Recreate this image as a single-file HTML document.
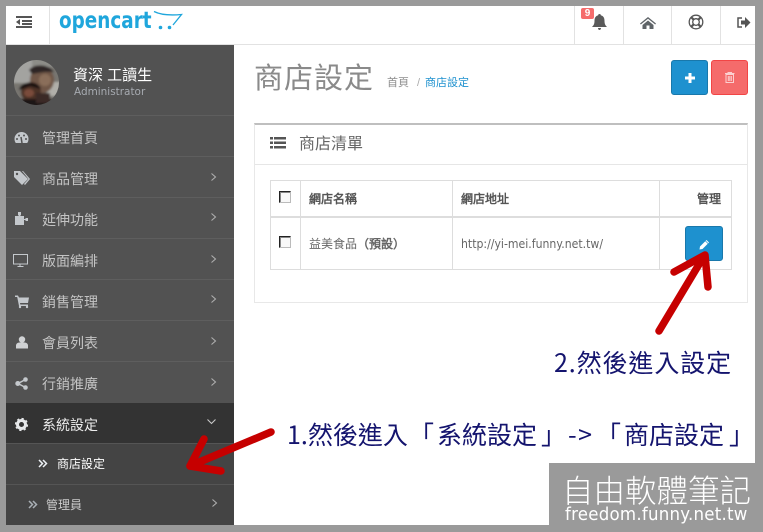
<!DOCTYPE html>
<html><head><meta charset="utf-8">
<style>
html,body{margin:0;padding:0;width:763px;height:532px;overflow:hidden;background:#9a9a9a}
*{box-sizing:border-box}
#p{position:relative;width:763px;height:532px;overflow:hidden;font-family:"Liberation Sans","Noto Sans CJK TC",sans-serif}
.a{position:absolute}
.t{position:absolute;white-space:nowrap;line-height:1}
.r{position:absolute;left:6px;width:228px;height:1px;background:#5e5e5e}
.m{position:absolute;left:42px;font-size:14px;color:#c4c4c4;white-space:nowrap;line-height:16px;font-family:"WenQuanYi Zen Hei","Liberation Sans",sans-serif}
svg{position:absolute;overflow:visible}
.c{position:absolute;left:279px;width:12px;height:12px;border:1px solid #bbb;border-top:1px solid #222;border-left:1px solid #222;background:#f8f8f8;box-shadow:inset 1px 1px 0 #888}
.n{position:absolute;white-space:nowrap;top:421px;font-size:25px;color:#14146e;font-family:'Noto Sans CJK TC',sans-serif;line-height:26px}
.h{font-size:12px;font-weight:bold;color:#555;font-family:'WenQuanYi Zen Hei',sans-serif}
</style></head><body><div id="p">
<div class="a" style="left:6px;top:6px;width:749px;height:519px;background:#fff"></div>
<!-- header -->
<div class="a" style="left:6px;top:44px;width:749px;height:1px;background:#e2e2e2"></div>
<div class="a" style="left:49px;top:6px;width:1px;height:38px;background:#e2e2e2"></div>
<div class="a" style="left:574px;top:6px;width:1px;height:38px;background:#e2e2e2"></div>
<div class="a" style="left:623px;top:6px;width:1px;height:38px;background:#e2e2e2"></div>
<div class="a" style="left:671px;top:6px;width:1px;height:38px;background:#e2e2e2"></div>
<div class="a" style="left:720px;top:6px;width:1px;height:38px;background:#e2e2e2"></div>
<svg style="left:16px;top:16px" width="17" height="13"><path d="M0 0h16v2H0zM6 4h10v2H6zM6 7h10v2H6zM0 10h16v2H0z" fill="#555"/><path d="M4 3v6L0 6z" fill="#555"/></svg>
<div class="t" style="left:59px;top:10px;font-size:23px;font-weight:bold;color:#1fa6dc;font-family:'DejaVu Sans',sans-serif;transform:scaleX(.8);transform-origin:0 0">opencart</div>
<svg style="left:153px;top:10px" width="30" height="22"><path d="M1 1.500C8 5 18 5.500 28.500 4.500L20 15" fill="none" stroke="#1fa6dc" stroke-width="1.300"/><circle cx="7.500" cy="17.500" r="1.800" fill="#1fa6dc"/><circle cx="16.500" cy="17.500" r="1.800" fill="#1fa6dc"/></svg>
<svg style="left:592px;top:14px" width="15" height="17"><path d="M7.500 0c1 0 1.300.6 1.300 1.300C11.500 2 12.500 4 12.500 7c0 3 1 4.500 2.500 6H0C1.500 11.500 2.500 10 2.500 7c0-3 1-5 3.700-5.700C6.200.6 6.500 0 7.500 0zM6 14h3c0 1-.6 2-1.500 2S6 15 6 14z" fill="#5a5a5a"/></svg>
<div class="a" style="left:581px;top:8px;width:13px;height:11px;background:#f56c6c;border-radius:2px;color:#fff;font-size:10px;font-weight:bold;text-align:center;line-height:11px">9</div>
<svg style="left:640px;top:17px" width="16" height="12"><path d="M8 0L0 6.500l.8 1L8 1.800l7.200 5.700.8-1zM2.500 8L8 3.500 13.500 8v4H9.500V8.500h-3V12h-4z" fill="#5f6468"/></svg>
<svg style="left:688px;top:14px" width="16" height="16"><circle cx="8" cy="8" r="6.800" fill="none" stroke="#555" stroke-width="1.300"/><circle cx="8" cy="8" r="3.300" fill="none" stroke="#555" stroke-width="1.300"/><path d="M3.200 3.200l2.500 2.500M12.800 3.200l-2.500 2.500M3.200 12.800l2.500-2.500M12.800 12.800l-2.500-2.500" stroke="#555" stroke-width="2.200"/></svg>
<svg style="left:737px;top:17px" width="14" height="12"><path d="M5 1H1v9h4" fill="none" stroke="#555" stroke-width="1.500"/><path d="M4 3.500h4V0l5.500 5.500L8 11V7.500H4z" fill="#555"/></svg>
<!-- sidebar -->
<div class="a" style="left:6px;top:45px;width:228px;height:358px;background:#525252"></div>
<div class="a" style="left:6px;top:403px;width:228px;height:40px;background:#333"></div>
<div class="a" style="left:6px;top:444px;width:228px;height:81px;background:#444"></div>
<div class="r" style="top:115px"></div><div class="r" style="top:156px"></div><div class="r" style="top:197px"></div><div class="r" style="top:238px"></div><div class="r" style="top:279px"></div><div class="r" style="top:320px"></div><div class="r" style="top:361px"></div>
<div class="r" style="top:443px;background:#555"></div><div class="r" style="top:484px;background:#555"></div>
<!-- avatar -->
<svg style="left:14px;top:60px" width="45" height="45"><defs><clipPath id="cp"><circle cx="22.500" cy="22.500" r="22.500"/></clipPath><filter id="bl"><feGaussianBlur stdDeviation="1"/></filter></defs><g clip-path="url(#cp)"><g filter="url(#bl)"><rect x="-3" y="-3" width="51" height="51" fill="#77746f"/><rect x="-3" y="-3" width="22" height="26" fill="#a3a3a0"/><rect x="18" y="-3" width="30" height="10" fill="#8d8d88"/><rect x="33" y="22" width="15" height="14" fill="#b0afa9"/><ellipse cx="28" cy="20" rx="12" ry="13" fill="#6f5647"/><path d="M15 10c5-7 20-6 25 2L30 12l-12 2z" fill="#2e2725"/><ellipse cx="31" cy="20" rx="6" ry="6" fill="#8a6e5a"/><ellipse cx="17" cy="32" rx="10" ry="10" fill="#4c3028"/><path d="M5 30c1-9 19-10 22-1l-11-3z" fill="#141110"/><ellipse cx="15" cy="33" rx="5" ry="4" fill="#7a4c3a"/><rect x="-3" y="39" width="51" height="10" fill="#1f1715"/><rect x="22" y="33" width="14" height="10" fill="#3a2a26"/></g></g></svg>
<div class="t" style="left:73px;top:68px;font-size:15px;color:#fff;font-family:'WenQuanYi Zen Hei',sans-serif">資深 工讀生</div>
<div class="t" style="left:74px;top:86px;font-size:11px;color:#a6aab0;font-family:'DejaVu Sans',sans-serif;transform:scaleX(.95);transform-origin:0 0">Administrator</div>
<div class="m" style="top:130px">管理首頁</div>
<div class="m" style="top:171px">商品管理</div>
<div class="m" style="top:212px">延伸功能</div>
<div class="m" style="top:253px">版面編排</div>
<div class="m" style="top:294px">銷售管理</div>
<div class="m" style="top:335px">會員列表</div>
<div class="m" style="top:376px">行銷推廣</div>
<div class="m" style="top:417px;color:#eee">系統設定</div>
<div class="m" style="left:57px;top:456px;font-size:12px;color:#fff">商店設定</div>
<div class="m" style="left:46px;top:497px;font-size:12px;color:#ccc">管理員</div>
<!-- side icons -->
<svg style="left:14px;top:131px" width="15" height="13"><path d="M7.500 1A7 7 0 0 0 .5 8c0 1.600.5 3 1.300 4h11.400c.8-1 1.300-2.400 1.300-4a7 7 0 0 0-7-7z" fill="#c4c8cc"/><path d="M8 12L7 6" stroke="#525252" stroke-width="1.500"/><circle cx="3" cy="8" r="1" fill="#525252"/><circle cx="12" cy="8" r="1" fill="#525252"/><circle cx="5" cy="4.500" r="1" fill="#525252"/><circle cx="10" cy="4.500" r="1" fill="#525252"/></svg>
<svg style="left:14px;top:171px" width="16" height="14"><path d="M0 0h6l8 8-6 6-8-8z" fill="#c4c8cc"/><circle cx="3" cy="3" r="1.200" fill="#525252"/><path d="M8 0h1l7 8-5 6-1-1 4.500-5z" fill="#c4c8cc"/></svg>
<svg style="left:15px;top:212px" width="14" height="13"><path d="M3 0h3v3h-.5v1H9v3h1.500V6H13v3h-2.500V8H9v5H0V4h3.500V3H3z" fill="#c4c8cc"/></svg>
<svg style="left:13px;top:254px" width="16" height="13"><path d="M.5.500h14v9.500H.5z" fill="none" stroke="#c4c8cc" stroke-width="1"/><path d="M7 10v2M4.500 12.500h6" stroke="#c4c8cc"/></svg>
<svg style="left:15px;top:295px" width="14" height="13"><path d="M0 .5h3l1 2h10l-1 5.500H5l.3 1.500H13V11H4L2.200 2H0z" fill="#c4c8cc"/><circle cx="5" cy="12" r="1.200" fill="#c4c8cc"/><circle cx="12" cy="12" r="1.200" fill="#c4c8cc"/></svg>
<svg style="left:16px;top:336px" width="12" height="13"><circle cx="6" cy="3.500" r="3.200" fill="#d0d2d4"/><path d="M0 12.500V9.500C0 7.500 2 6.500 3.500 6.500h5C10 6.500 12 7.500 12 9.500v3z" fill="#d0d2d4"/></svg>
<svg style="left:15px;top:377px" width="13" height="13"><path d="M10.500 2.500L3 6.500l7.500 4" fill="none" stroke="#c4c8cc" stroke-width="1.500"/><circle cx="10.500" cy="2.500" r="2.300" fill="#c4c8cc"/><circle cx="2.800" cy="6.500" r="2.500" fill="#c4c8cc"/><circle cx="10.500" cy="10.500" r="2.300" fill="#c4c8cc"/></svg>
<svg style="left:15px;top:418px" width="13" height="13"><circle cx="6.500" cy="6.500" r="4" fill="none" stroke="#e6e8ea" stroke-width="3"/><circle cx="6.500" cy="6.500" r="5.900" fill="none" stroke="#e6e8ea" stroke-width="1.400" stroke-dasharray="2.300 2.300"/></svg>
<!-- chevrons -->
<svg style="left:211px;top:173px" width="6" height="8"><path d="M.5.5l4 3.500-4 3.500" fill="none" stroke="#aeaeae" stroke-width="1.100"/></svg>
<svg style="left:211px;top:213px" width="6" height="8"><path d="M.5.5l4 3.500-4 3.500" fill="none" stroke="#aeaeae" stroke-width="1.100"/></svg>
<svg style="left:211px;top:255px" width="6" height="8"><path d="M.5.5l4 3.500-4 3.500" fill="none" stroke="#aeaeae" stroke-width="1.100"/></svg>
<svg style="left:211px;top:295px" width="6" height="8"><path d="M.5.5l4 3.500-4 3.500" fill="none" stroke="#aeaeae" stroke-width="1.100"/></svg>
<svg style="left:211px;top:337px" width="6" height="8"><path d="M.5.5l4 3.500-4 3.500" fill="none" stroke="#aeaeae" stroke-width="1.100"/></svg>
<svg style="left:211px;top:378px" width="6" height="8"><path d="M.5.5l4 3.500-4 3.500" fill="none" stroke="#aeaeae" stroke-width="1.100"/></svg>
<svg style="left:207px;top:419px" width="9" height="6"><path d="M.5.5l4 4 4-4" fill="none" stroke="#c8c8c8" stroke-width="1.100"/></svg>
<svg style="left:212px;top:499px" width="6" height="8"><path d="M.5.5l4 3.500-4 3.500" fill="none" stroke="#aeaeae" stroke-width="1.100"/></svg>
<svg style="left:38px;top:459px" width="10" height="9"><path d="M1 1l3.500 3.500L1 8M5 1l3.500 3.500L5 8" fill="none" stroke="#eef2f6" stroke-width="1.500"/></svg>
<svg style="left:28px;top:500px" width="10" height="9"><path d="M1 1l3.500 3.500L1 8M5 1l3.500 3.500L5 8" fill="none" stroke="#aab0b6" stroke-width="1.500"/></svg>
<!-- page title -->
<div class="t" style="left:254px;top:65px;font-size:29px;color:#8a8a8a;font-family:'WenQuanYi Zen Hei',sans-serif;letter-spacing:1px">商店設定</div>
<div class="t" style="left:387px;top:78px;font-size:11px;color:#8e8e8e;font-family:'WenQuanYi Zen Hei',sans-serif">首頁</div>
<div class="t" style="left:417px;top:78px;font-size:11px;color:#aaa">/</div>
<div class="t" style="left:425px;top:78px;font-size:11px;color:#1e91cf;font-family:'WenQuanYi Zen Hei',sans-serif">商店設定</div>
<!-- buttons -->
<div class="a" style="left:671px;top:60px;width:37px;height:35px;background:#1e91cf;border:1px solid #1978ab;border-radius:3px"></div>
<svg style="left:685px;top:73px" width="10" height="10"><path d="M0 5h10M5 0v10" stroke="#fff" stroke-width="3"/></svg>
<div class="a" style="left:711px;top:60px;width:37px;height:35px;background:#f56b6b;border:1px solid #f24545;border-radius:3px"></div>
<svg style="left:725px;top:72px" width="10" height="11"><path d="M0 1.500h9.500M3 1V.5h3.500V1M1 2.500h7.500V10.500H1zM3.300 4v5M4.800 4v5M6.300 4v5" fill="none" stroke="#fbd0d0" stroke-width="1"/></svg>
<!-- panel -->
<div class="a" style="left:254px;top:123px;width:494px;height:180px;background:#fff;border:1px solid #e8e8e8;border-top:2px solid #bfbfbf"></div>
<div class="a" style="left:255px;top:164px;width:492px;height:1px;background:#e6e6e6"></div>
<svg style="left:270px;top:137px" width="16" height="13"><path d="M0 0h3v2.500H0zM4 0h12v2.500H4zM0 4.500h3V7H0zM4 4.500h12V7H4zM0 9h3v2.500H0zM4 9h12v2.500H4z" fill="#555"/></svg>
<div class="t" style="left:299px;top:137px;font-size:16px;color:#666;font-family:'WenQuanYi Zen Hei',sans-serif">商店清單</div>
<!-- table -->
<div class="a" style="left:270px;top:180px;width:462px;height:90px;border:1px solid #ddd"></div>
<div class="a" style="left:271px;top:216px;width:460px;height:2px;background:#ddd"></div>
<div class="a" style="left:300px;top:181px;width:1px;height:88px;background:#ddd"></div>
<div class="a" style="left:452px;top:181px;width:1px;height:88px;background:#ddd"></div>
<div class="a" style="left:659px;top:181px;width:1px;height:88px;background:#ddd"></div>
<div class="c" style="top:191px"></div><div class="c" style="top:236px"></div>
<div class="t h" style="left:309px;top:193px">網店名稱</div>
<div class="t h" style="left:461px;top:193px">網店地址</div>
<div class="t h" style="left:697px;top:193px">管理</div>
<div class="t" style="left:309px;top:238px;font-size:12px;color:#666;font-family:'WenQuanYi Zen Hei',sans-serif">益美食品<b>（預設）</b></div>
<div class="t" style="left:461px;top:238px;font-size:12px;color:#666;font-family:'DejaVu Sans',sans-serif;transform:scaleX(.91);transform-origin:0 0">http://yi-mei.funny.net.tw/</div>
<div class="a" style="left:685px;top:226px;width:38px;height:35px;background:#1e91cf;border:1px solid #1978ab;border-radius:3px"></div>
<svg style="left:699px;top:239px" width="11" height="11"><path d="M7.500 1L10 3.500 3.500 10 .5 10.500 1 7.500z" fill="#fff"/><path d="M6.500 2l2.500 2.500" stroke="#1e91cf" stroke-width=".7"/></svg>
<!-- annotations -->
<svg style="left:0;top:0" width="763" height="532"><g fill="none" stroke="#c60000" stroke-width="7.500" stroke-linecap="round" stroke-linejoin="round"><path d="M659 331L704 256"/><path d="M674 272L705 255L708 287"/><path d="M271 432L190 466"/><path d="M204 439L190 466L221 471"/></g></svg>
<div class="t" style="left:554px;top:349px;font-size:25px;color:#14146e;font-family:'Noto Sans CJK TC',sans-serif;line-height:26px;letter-spacing:.9px">2.然後進入設定</div>
<div class="n" style="left:287px">1.然後進入</div>
<div class="n" style="left:409px">「</div>
<div class="n" style="left:437px">系統設定</div>
<div class="n" style="left:541px">」</div>
<div class="n" style="left:568px;letter-spacing:1.500px">-&gt;</div>
<div class="n" style="left:596px">「</div>
<div class="n" style="left:624px">商店設定</div>
<div class="n" style="left:729px">」</div>
<!-- watermark -->
<div class="a" style="left:549px;top:463px;width:214px;height:69px;background:#9a9a9a"></div>
<div class="t" style="left:562px;top:472px;font-size:31.500px;color:#fff;font-family:'Noto Sans CJK TC',sans-serif;font-weight:300;line-height:34px">自由軟體筆記</div>
<div class="t" style="left:565px;top:506px;font-size:17.500px;color:#fff;font-family:'DejaVu Sans',sans-serif;line-height:18px;letter-spacing:.25px;transform:scaleX(.95);transform-origin:0 0">freedom.funny.net.tw</div>
</div></body></html>
